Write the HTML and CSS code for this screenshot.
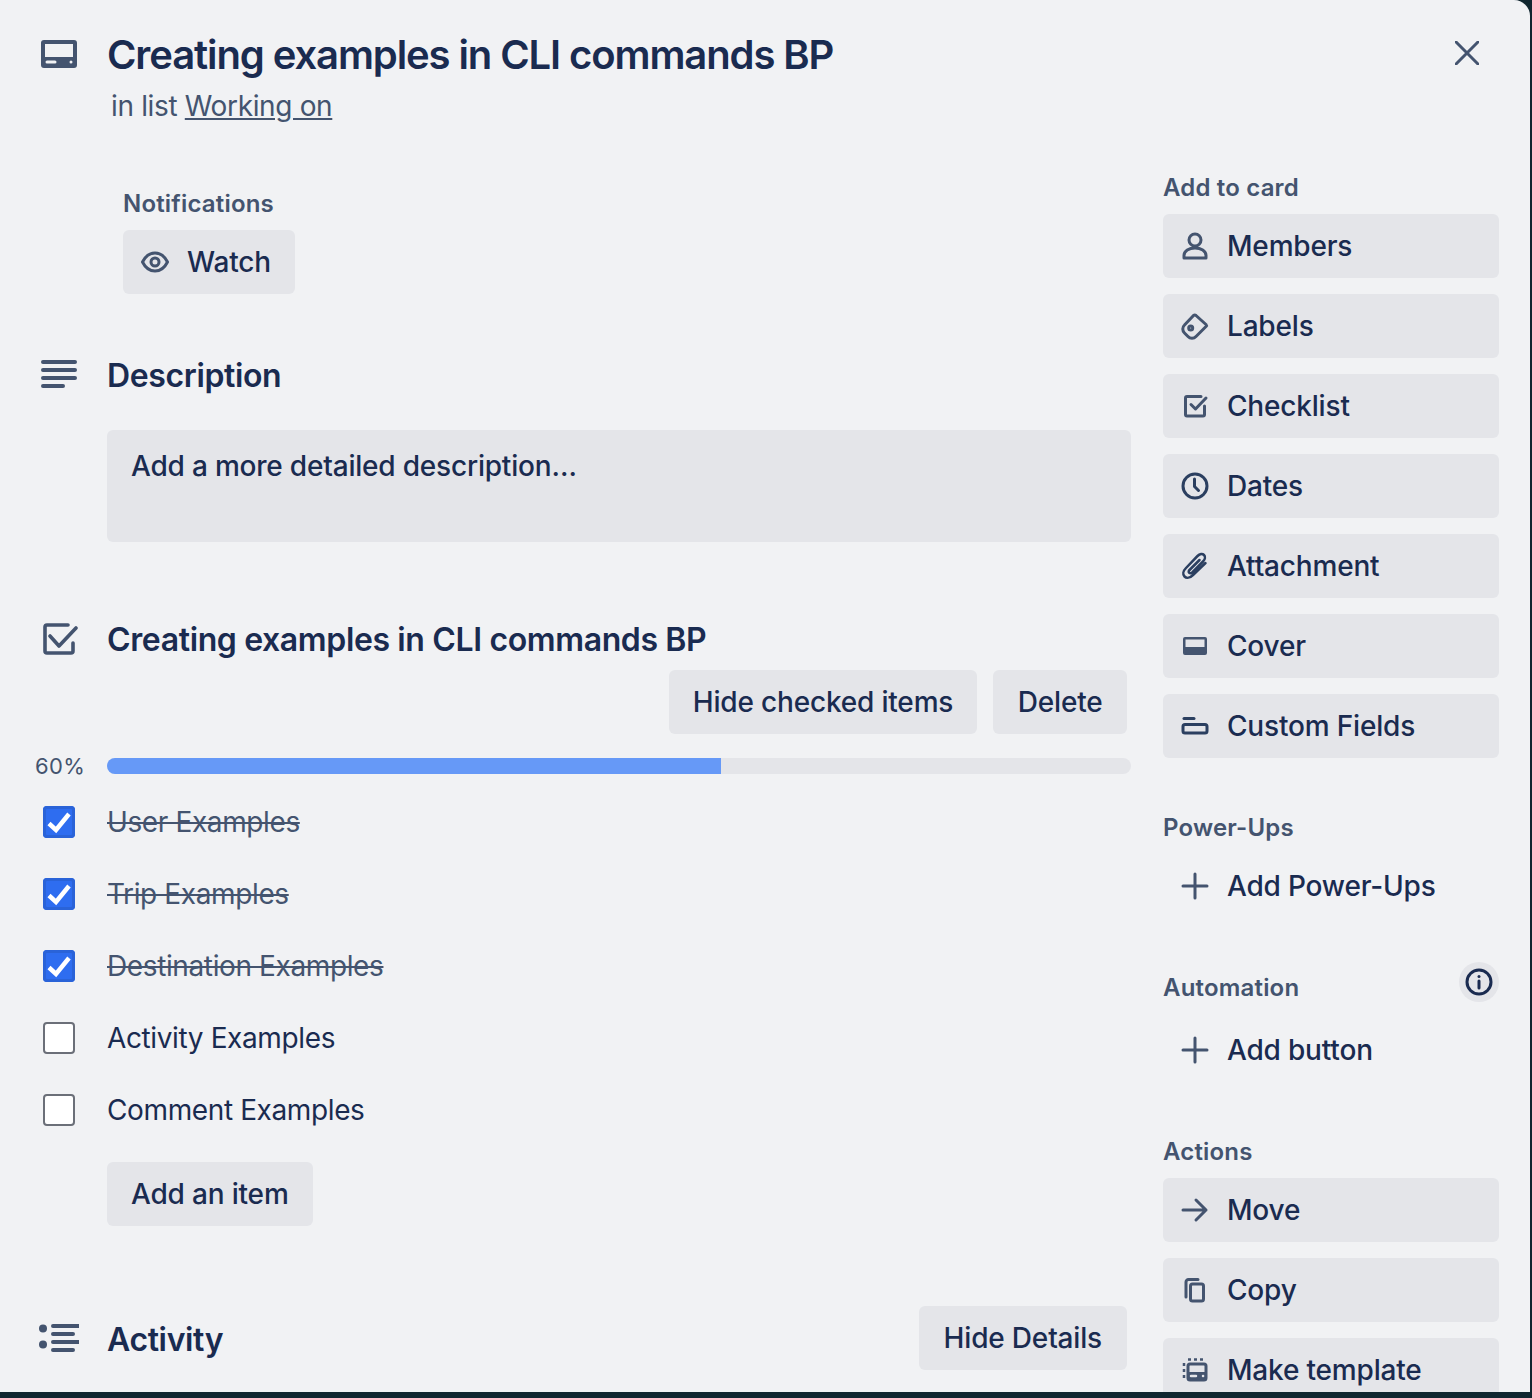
FILE: index.html
```html
<!DOCTYPE html>
<html lang="en">
<head>
    <meta charset="UTF-8">
    <title>Creating examples in CLI commands BP</title>
    <link rel="stylesheet" href="styles.css">
</head>
<body>
<div class="modal">
    <div class="card-head">
        <svg class="big-icon" viewBox="0 0 36 28"><path fill-rule="evenodd" d="M3 0h30a3 3 0 0 1 3 3v22a3 3 0 0 1-3 3H3a3 3 0 0 1-3-3V3a3 3 0 0 1 3-3zm1 4v13h28V4zm2 16.500a1.500 1.500 0 0 0 0 3h8a1.500 1.500 0 0 0 0-3zm24 0a1.500 1.500 0 1 0 0 3 1.500 1.500 0 0 0 0-3z"/></svg>
        <div class="head-text">
            <h1>Creating examples in CLI commands BP</h1>
            <p class="in-list">in list <a href="#">Working on</a></p>
        </div>
        <svg class="close" viewBox="0 0 24 24"><path d="M1 1l22 22M23 1L1 23"/></svg>
    </div>

    <div class="columns">
        <div class="main">
            <div class="notifications">
                <h3>Notifications</h3>
                <button class="btn watch">
                    <svg class="ico" viewBox="0 0 28 28"><path class="line" d="M1.500 14C4.500 8 9 5 14 5s9.500 3 12.500 9c-3 6-7.500 9-12.500 9S4.500 20 1.500 14z"/><circle class="line" cx="14" cy="14" r="4"/></svg>
                    Watch
                </button>
            </div>

            <div class="section-title desc-title">
                <svg class="big-icon lines" viewBox="0 0 36 28"><path d="M2 2h32M2 10h32M2 18h32M2 26h20"/></svg>
                <h2>Description</h2>
            </div>
            <div class="desc-box">Add a more detailed description…</div>

            <div class="section-title check-title">
                <svg class="big-icon check-ico" viewBox="0 0 36 32"><path d="M31 20v8a2 2 0 0 1-2 2H5a2 2 0 0 1-2-2V4a2 2 0 0 1 2-2h21"/><path d="M8 13l9 10L34 5"/></svg>
                <h2>Creating examples in CLI commands BP</h2>
            </div>
            <div class="check-actions">
                <button class="btn">Hide checked items</button>
                <button class="btn delete">Delete</button>
            </div>
            <div class="progress">
                <span class="pct">60%</span>
                <div class="bar"><div class="fill" style="width: 60%"></div></div>
            </div>
            <ul class="items">
                <li class="done"><span class="box"><svg viewBox="0 0 32 32"><path d="M6 17.500l7 6.500L26 8"/></svg></span><span>User Examples</span></li>
                <li class="done"><span class="box"><svg viewBox="0 0 32 32"><path d="M6 17.500l7 6.500L26 8"/></svg></span><span>Trip Examples</span></li>
                <li class="done"><span class="box"><svg viewBox="0 0 32 32"><path d="M6 17.500l7 6.500L26 8"/></svg></span><span>Destination Examples</span></li>
                <li><span class="box"></span><span>Activity Examples</span></li>
                <li><span class="box"></span><span>Comment Examples</span></li>
            </ul>
            <button class="btn add-item">Add an item</button>

            <div class="section-title activity-title">
                <svg class="big-icon activity-ico" viewBox="0 0 40 28"><circle cx="4" cy="4.500" r="4"/><circle cx="4" cy="20.500" r="4"/><path d="M14 2h26M14 10h20M14 18h26M14 26h20"/></svg>
                <h2>Activity</h2>
                <button class="btn details">Hide Details</button>
            </div>
        </div>

        <div class="side">
            <h3>Add to card</h3>
            <button class="btn side-btn"><svg class="ico" viewBox="0 0 28 28"><circle class="line" cx="14" cy="8" r="6"/><path class="line" d="M3 26v-2.500C3 19 8 16 14 16s11 3 11 7.500V26z"/></svg>Members</button>
            <button class="btn side-btn"><svg class="ico" viewBox="0 0 28 28"><path class="line" d="M12.500 3.500a2 2 0 0 1 2.500 0l10 9a1.500 1.500 0 0 1 0 2L15 24.500a5.500 5.500 0 0 1-8 0l-3.500-3.500a5.500 5.500 0 0 1 0-8z"/><circle class="line" cx="9.700" cy="16" r="2"/></svg>Labels</button>
            <button class="btn side-btn"><svg class="ico" viewBox="0 0 28 28"><path class="line" d="M23.500 14v8.500a1.500 1.500 0 0 1-1.500 1.500H6a1.500 1.500 0 0 1-1.500-1.500V6A1.500 1.500 0 0 1 6 4.500h14"/><path class="line" d="M10 12.500l4.500 4.500L25 6"/></svg>Checklist</button>
            <button class="btn side-btn"><svg class="ico dark" viewBox="0 0 28 28"><circle class="line" cx="14" cy="14" r="12"/><path class="line" d="M13.500 7v7.500l4 4"/></svg>Dates</button>
            <button class="btn side-btn"><svg class="ico dark" viewBox="0 0 28 28"><path class="line thin" d="M18.500 8L8.500 18c-1 1-1 2.200-.3 2.800s1.900.500 3-.500L22 9.500c2.200-2.200 2.500-5 1-6.500s-4.300-1.200-6.500 1L5 16c-3 3-3.500 6.500-1.500 8.500s5.500 1.500 8.500-1.500L24.500 11"/></svg>Attachment</button>
            <button class="btn side-btn"><svg class="ico" viewBox="0 0 28 28"><path fill-rule="evenodd" class="solid" d="M4 5h20a2 2 0 0 1 2 2v14a2 2 0 0 1-2 2H4a2 2 0 0 1-2-2V7a2 2 0 0 1 2-2zm.500 2.500V15h19V7.500z"/></svg>Cover</button>
            <button class="btn side-btn"><svg class="ico dark" viewBox="0 0 28 28"><path class="line" d="M3 6.500h10"/><rect class="line" x="2" y="12.500" width="24" height="8.500" rx="2"/></svg>Custom Fields</button>

            <h3 class="side-head">Power-Ups</h3>
            <button class="btn side-btn plain"><svg class="ico" viewBox="0 0 28 28"><path class="line" d="M14 2v24M2 14h24"/></svg>Add Power-Ups</button>

            <div class="auto-head">
                <h3>Automation</h3>
                <span class="info"><svg viewBox="0 0 28 28"><circle class="line" cx="14" cy="14" r="12"/><path class="line" d="M14 13v7"/><circle class="dot" cx="14" cy="8.500" r="1.500"/></svg></span>
            </div>
            <button class="btn side-btn plain"><svg class="ico" viewBox="0 0 28 28"><path class="line" d="M14 2v24M2 14h24"/></svg>Add button</button>

            <h3 class="side-head">Actions</h3>
            <button class="btn side-btn"><svg class="ico" viewBox="0 0 28 28"><path class="line" d="M2 14h23M15 4l10 10-10 10"/></svg>Move</button>
            <button class="btn side-btn"><svg class="ico" viewBox="0 0 28 28"><path class="line" d="M5 21V6a2.500 2.500 0 0 1 2.500-2.500H17"/><rect class="line" x="9.500" y="8" width="13" height="17" rx="2"/></svg>Copy</button>
            <button class="btn side-btn"><svg class="ico" viewBox="0 0 28 28"><rect class="line" x="7" y="8" width="18" height="16" rx="2"/><path class="solid" d="M7 16h18v8H7z"/><path class="cut" d="M10 20h5M22 20h.1"/><path class="line thin dash" d="M7 3.500h17M3 7v16"/></svg>Make template</button>
        </div>
    </div>
</div>
</body>
</html>
```
FILE: styles.css
```css
* { padding: 0; margin: 0; box-sizing: border-box; }
html, body { height: 100%; }
body {
    background: #10262f;
    font-family: Inter, "Noto Sans", "Liberation Sans", sans-serif;
    color: #1a2b50;
    overflow: hidden;
}
.modal {
    width: 1530px;
    height: 1392px;
    background: #f1f2f4;
    border-top-right-radius: 16px;
    overflow: hidden;
    padding: 31px 31px 0 40px;
}
h1 { font-size: 40px; line-height: 48px; font-weight: 600; letter-spacing: -1.1px; }
h2 { font-size: 32px; line-height: 40px; font-weight: 600; letter-spacing: -0.37px; padding-top: 2px; }
h3 { font-size: 24px; line-height: 32px; font-weight: 600; color: #44546f; letter-spacing: 0.18px; }
button { font-family: inherit; border: none; cursor: pointer; }

.card-head { display: flex; align-items: flex-start; }
.big-icon { width: 38px; height: 28px; flex: none; fill: #44546f; }
.card-head .big-icon { margin-top: 9px; }
.head-text { margin-left: 29px; flex: 1; }
.in-list { font-size: 28px; line-height: 40px; color: #44546f; margin: 7px 0 0 4px; letter-spacing: -0.35px; }
.in-list a { color: #44546f; }
.close { width: 24px; height: 24px; margin: 10px 20px 0 0; fill: none; stroke: #44546f; stroke-width: 3; stroke-linecap: round; }

.columns { display: flex; justify-content: space-between; margin-top: 46px; }
.main { width: 1091px; margin-top: 16px; }
.side { width: 336px; }

.btn {
    display: flex;
    align-items: center;
    height: 64px;
    padding: 0 24px;
    background: #e4e5e9;
    color: #1a2b50;
    font-size: 28px;
    font-weight: 500;
    letter-spacing: -0.18px;
    border-radius: 6px;
}
.ico { width: 28px; height: 28px; flex: none; margin-right: 18px; }
.line { fill: none; stroke: #44546f; stroke-width: 3; stroke-linecap: round; stroke-linejoin: round; }
.thin { stroke-width: 2.500; }
.dark .line { stroke: #2b3f60; }
.solid { fill: #44546f; }
.dot { fill: #1a2b50; }
.dash { stroke-dasharray: 3 3; stroke-linecap: butt; }
.cut { fill: none; stroke: #e4e5e9; stroke-width: 2.500; stroke-linecap: round; }

.notifications { margin-left: 83px; }
.notifications h3 { margin-bottom: 10px; }
.watch { width: 172px; padding: 0 18px; }
.watch .ico { margin-right: 18px; }

.section-title { display: flex; align-items: center; height: 40px; }
.section-title .big-icon { margin-right: 29px; }
.desc-title { margin-top: 61px; }
.lines, .activity-ico { fill: none; stroke: #44546f; stroke-width: 4; stroke-linecap: round; }
.lines { transform: translateY(-1px); }
.desc-box {
    margin: 35px 0 0 67px;
    height: 112px;
    padding: 16px 24px;
    background: #e4e5e9;
    border-radius: 6px;
    font-size: 28px;
    line-height: 40px;
    font-weight: 500;
    letter-spacing: -0.2px;
}
.check-title { margin-top: 77px; }
.section-title .check-ico { width: 36px; height: 32px; margin: 0 29px 0 2px; fill: none; stroke: #44546f; stroke-width: 3.600; stroke-linecap: round; stroke-linejoin: round; }
.check-actions { display: flex; justify-content: flex-end; gap: 16px; margin-top: 11px; padding-right: 4px; }
.delete { padding: 0 24.500px; }

.progress { display: flex; align-items: center; margin-top: 24px; height: 16px; }
.pct { width: 67px; margin-left: -5px; margin-right: 5px; font-size: 22px; color: #44546f; letter-spacing: 0.4px; }
.bar { flex: 1; height: 16px; border-radius: 8px; background: #e4e5e9; overflow: hidden; }
.fill { height: 100%; background: #6699f7; }

.items { list-style: none; margin-top: 12px; }
.items li { display: flex; align-items: center; height: 72px; font-size: 28px; letter-spacing: -0.38px; }
.box {
    width: 32px;
    height: 32px;
    margin: 0 32px 0 3px;
    border: 2.500px solid #6b6f78;
    border-radius: 4px;
    background: #fff;
}
.done .box { background: #2e6df0; border: none; box-shadow: inset 0 0 0 3px #2a63d8; }
.box svg { display: block; width: 100%; height: 100%; fill: none; stroke: #fff; stroke-width: 4.500; }
.done { color: #44546f; text-decoration: line-through; }

.add-item { margin: 16px 0 0 67px; }
.activity-title { margin-top: 92px; }
.activity-title h2 { padding-top: 4px; }
.section-title .activity-ico { width: 40px; margin: 0 28px 0 -1px; }
.activity-ico circle { fill: #44546f; stroke: none; }
.details { margin-left: auto; margin-right: 4px; padding: 0 25px; }

.side h3 { margin-bottom: 10px; }
.side-btn { width: 100%; padding: 0 18px; margin-bottom: 16px; }
.side-btn .ico { margin-right: 18px; }
.plain { background: none; }
.side .side-head { margin-top: 54px; }
.auto-head { display: flex; justify-content: space-between; align-items: flex-start; height: 41px; margin: 44px 0 15px; }
.side .auto-head h3 { margin: 10px 0 0; }
.info { width: 40px; height: 40px; border-radius: 50%; background: #e4e5e9; display: flex; align-items: center; justify-content: center; }
.info svg { width: 28px; height: 28px; }
.info .line { stroke: #1a2b50; }
```
